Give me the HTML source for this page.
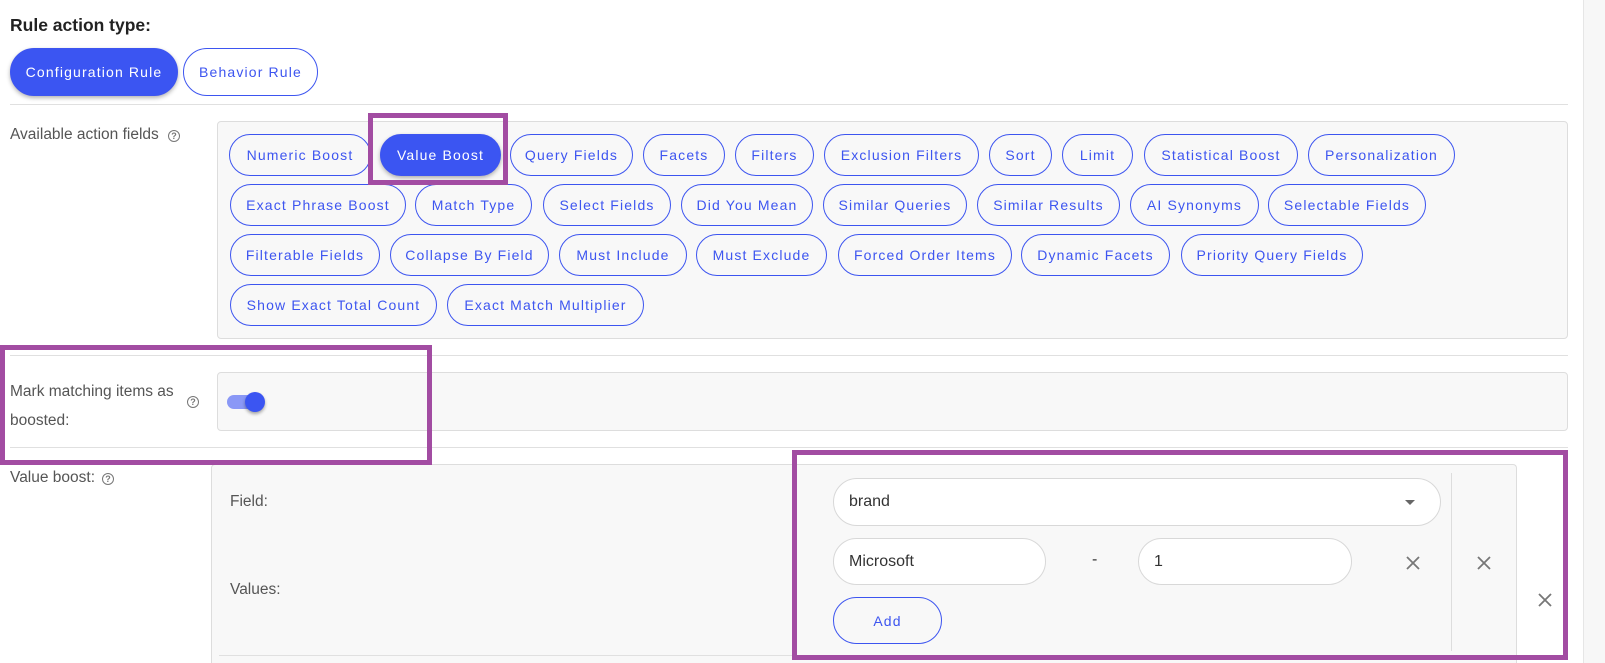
<!DOCTYPE html>
<html style="height:663px;overflow:hidden"><head><meta charset="utf-8"><style>
*{box-sizing:border-box;margin:0;padding:0}
body{width:1605px;height:663px;overflow:hidden;background:#fff;font-family:"Liberation Sans",sans-serif;position:relative}
.a{position:absolute}
.chip{position:absolute;height:42px;border:1px solid #3d55f0;border-radius:21px;color:#3d55f0;font-size:14px;letter-spacing:1.15px;display:flex;align-items:center;justify-content:center;background:transparent;white-space:nowrap}
.chip.on{background:#3b55f2;color:#fff;box-shadow:0 2px 4px rgba(0,0,0,.3)}
.lbl{position:absolute;color:#555;font-size:15.5px}
.hr{position:absolute;height:1px;background:#e0e0e0}
.q{position:absolute;width:12px;height:12px;border:1.2px solid #777;border-radius:50%;font-size:9px;color:#777;text-align:center;line-height:10px;font-weight:bold}
.inp{position:absolute;background:#fff;border:1px solid #d8d8d8;border-radius:24px;font-size:16px;color:#333;display:flex;align-items:center;padding-left:15px}
.pb{position:absolute;border:5px solid #a24ca2}
</style></head><body>
<div class="a" style="left:1583px;top:0;width:1px;height:663px;background:#e6e6e6"></div>
<div class="a" style="left:1584px;top:0;width:21px;height:663px;background:#f7f7f7"></div>

<div class="a" style="left:10px;top:15px;font-size:17.5px;font-weight:bold;color:#222">Rule action type:</div>
<div class="chip on" style="left:10px;top:48px;width:168px;height:48px;border-radius:24px">Configuration Rule</div>
<div class="chip" style="left:183px;top:48px;width:135px;height:48px;border-radius:24px">Behavior Rule</div>
<div class="hr" style="left:10px;top:104px;width:1558px"></div>

<div class="lbl" style="left:10px;top:126px">Available action fields</div>
<div class="q" style="left:168px;top:130px">?</div>
<div class="a" style="left:217px;top:121px;width:1351px;height:218px;background:#f8f8f8;border:1px solid #ddd;border-radius:4px"></div>

<div class="chip" style="left:229px;top:134px;width:142px">Numeric Boost</div>
<div class="chip on" style="left:380px;top:134px;width:121px">Value Boost</div>
<div class="chip" style="left:510px;top:134px;width:123px">Query Fields</div>
<div class="chip" style="left:643px;top:134px;width:82px">Facets</div>
<div class="chip" style="left:735px;top:134px;width:79px">Filters</div>
<div class="chip" style="left:824px;top:134px;width:155px">Exclusion Filters</div>
<div class="chip" style="left:989px;top:134px;width:63px">Sort</div>
<div class="chip" style="left:1062px;top:134px;width:71px">Limit</div>
<div class="chip" style="left:1144px;top:134px;width:154px">Statistical Boost</div>
<div class="chip" style="left:1308px;top:134px;width:147px">Personalization</div>

<div class="chip" style="left:230px;top:184px;width:176px">Exact Phrase Boost</div>
<div class="chip" style="left:415px;top:184px;width:117px">Match Type</div>
<div class="chip" style="left:543px;top:184px;width:128px">Select Fields</div>
<div class="chip" style="left:681px;top:184px;width:132px">Did You Mean</div>
<div class="chip" style="left:823px;top:184px;width:144px">Similar Queries</div>
<div class="chip" style="left:977px;top:184px;width:143px">Similar Results</div>
<div class="chip" style="left:1130px;top:184px;width:129px">AI Synonyms</div>
<div class="chip" style="left:1268px;top:184px;width:158px">Selectable Fields</div>

<div class="chip" style="left:230px;top:234px;width:150px">Filterable Fields</div>
<div class="chip" style="left:390px;top:234px;width:159px">Collapse By Field</div>
<div class="chip" style="left:559px;top:234px;width:128px">Must Include</div>
<div class="chip" style="left:696px;top:234px;width:131px">Must Exclude</div>
<div class="chip" style="left:838px;top:234px;width:174px">Forced Order Items</div>
<div class="chip" style="left:1021px;top:234px;width:149px">Dynamic Facets</div>
<div class="chip" style="left:1181px;top:234px;width:182px">Priority Query Fields</div>

<div class="chip" style="left:230px;top:284px;width:207px">Show Exact Total Count</div>
<div class="chip" style="left:447px;top:284px;width:197px">Exact Match Multiplier</div>

<div class="hr" style="left:10px;top:355px;width:1558px"></div>
<div class="lbl" style="left:10px;top:377px;line-height:29px">Mark matching items as<br>boosted:</div>
<div class="q" style="left:187px;top:396px">?</div>
<div class="a" style="left:217px;top:372px;width:1351px;height:59px;background:#f8f8f8;border:1px solid #ddd;border-radius:4px"></div>
<div class="a" style="left:227px;top:395px;width:36px;height:14px;border-radius:7px;background:#8a98f6"></div>
<div class="a" style="left:245px;top:392px;width:20px;height:20px;border-radius:50%;background:#3b55f2;box-shadow:0 2px 3px rgba(0,0,0,.35)"></div>
<div class="hr" style="left:10px;top:447px;width:1558px"></div>

<div class="lbl" style="left:10px;top:469px">Value boost:</div>
<div class="q" style="left:102px;top:473px">?</div>
<div class="a" style="left:211px;top:464px;width:1306px;height:199px;background:#f8f8f8;border:1px solid #ddd;border-bottom:none;border-radius:4px 4px 0 0"></div>
<div class="lbl" style="left:230px;top:493px">Field:</div>
<div class="lbl" style="left:230px;top:581px">Values:</div>
<div class="hr" style="left:219px;top:655px;width:1290px"></div>
<div class="a" style="left:1451px;top:473px;width:1px;height:178px;background:#ddd"></div>

<div class="inp" style="left:833px;top:478px;width:608px;height:48px">brand</div>
<div class="a" style="left:1405px;top:500px;width:0;height:0;border-left:5px solid transparent;border-right:5px solid transparent;border-top:5px solid #666"></div>
<div class="inp" style="left:833px;top:538px;width:213px;height:47px">Microsoft</div>
<div class="a" style="left:1092px;top:551px;font-size:16px;color:#333">-</div>
<div class="inp" style="left:1138px;top:538px;width:214px;height:47px">1</div>
<div class="chip" style="left:833px;top:597px;width:109px;height:47px;border-radius:24px">Add</div>

<svg class="a" style="left:1405px;top:555px" width="16" height="16"><path d="M2 2L14 14M14 2L2 14" stroke="#777" stroke-width="1.8"/></svg>
<svg class="a" style="left:1476px;top:555px" width="16" height="16"><path d="M2 2L14 14M14 2L2 14" stroke="#777" stroke-width="1.8"/></svg>
<svg class="a" style="left:1537px;top:592px" width="16" height="16"><path d="M2 2L14 14M14 2L2 14" stroke="#777" stroke-width="1.8"/></svg>

<div class="pb" style="left:368px;top:113px;width:140px;height:72px"></div>
<div class="pb" style="left:0;top:345px;width:432px;height:120px"></div>
<div class="pb" style="left:792px;top:450px;width:776px;height:210px"></div>
</body></html>
